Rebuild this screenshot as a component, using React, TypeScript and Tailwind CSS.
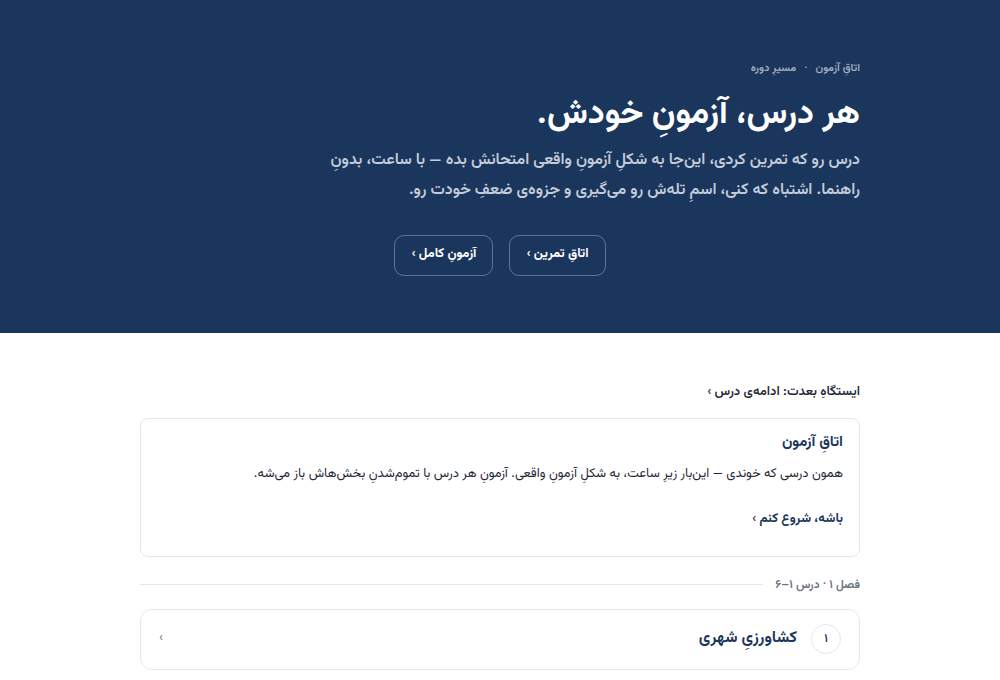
const font = { fontFamily: "Vazirmatn, 'Noto Sans Arabic', 'DejaVu Sans', sans-serif" };

const App = () => {
  return (
    <div dir="rtl" style={font} className="min-h-[680px] bg-white">
      <header className="bg-[#1b365d] h-[333px]">
        <div className="w-[720px] mx-auto pt-[61px]">
          <div className="flex items-center gap-2 text-[11px] font-semibold text-[#a3afc1]">
            <span>اتاقِ آزمون</span>
            <span>·</span>
            <span>مسیرِ دوره</span>
          </div>
          <h1 className="mt-[13px] text-[34px] leading-[48px] font-bold text-white">
            هر درس، آزمونِ خودش.
          </h1>
          <p className="mt-[7px] max-w-[540px] text-[16px] leading-[30px] font-semibold text-[#c3ccd9]">
            درس رو که تمرین کردی، این‌جا به شکلِ آزمونِ واقعی امتحانش بده — با ساعت، بدونِ
            راهنما. اشتباه که کنی، اسمِ تله‌ش رو می‌گیری و جزوه‌ی ضعفِ خودت رو.
          </p>
          <div className="mt-[29px] flex justify-center gap-4">
            <button className="h-[41px] px-4 rounded-[10px] border border-white/30 text-white text-[13px] font-bold">
              اتاقِ تمرین ›
            </button>
            <button className="h-[41px] px-4 rounded-[10px] border border-white/30 text-white text-[13px] font-bold">
              آزمونِ کامل ›
            </button>
          </div>
        </div>
      </header>

      <main className="w-[720px] mx-auto pt-[50px]">
        <div className="text-[13px] font-semibold text-[#1f2937]">ایستگاهِ بعدت: ادامه‌ی درس ›</div>

        <div className="mt-[15px] border border-[#e5e7eb] rounded-lg px-4 pt-[13px] h-[139px]">
          <div className="text-[15px] font-bold text-[#1b365d]">اتاقِ آزمون</div>
          <p className="mt-[11px] text-[13px] text-[#1f2937]">
            همون درسی که خوندی — این‌بار زیرِ ساعت، به شکلِ آزمونِ واقعی. آزمونِ هر درس با تموم‌شدنِ بخش‌هاش باز می‌شه.
          </p>
          <div className="mt-[25px] text-[13px] font-bold text-[#1b365d]">باشه، شروع کنم ›</div>
        </div>

        <div className="mt-[19px] flex items-center gap-3">
          <span className="text-[12px] font-semibold text-[#6b7280] whitespace-nowrap">فصل ۱ · درس ۱–۶</span>
          <div className="flex-1 h-px bg-[#e5e7eb]" />
        </div>

        <div className="mt-[15px] h-[61px] border border-[#e5e7eb] rounded-xl flex items-center px-[18px] gap-[14px]">
          <div className="w-[30px] h-[30px] rounded-full border border-[#e5e7eb] flex items-center justify-center text-[12px] font-semibold text-[#1b365d]">
            ۱
          </div>
          <div className="flex-1 text-[16px] font-bold text-[#1b365d]">کشاورزیِ شهری</div>
          <span className="text-[13px] text-[#6b7280]">›</span>
        </div>
      </main>
    </div>
  );
};

export default App;
